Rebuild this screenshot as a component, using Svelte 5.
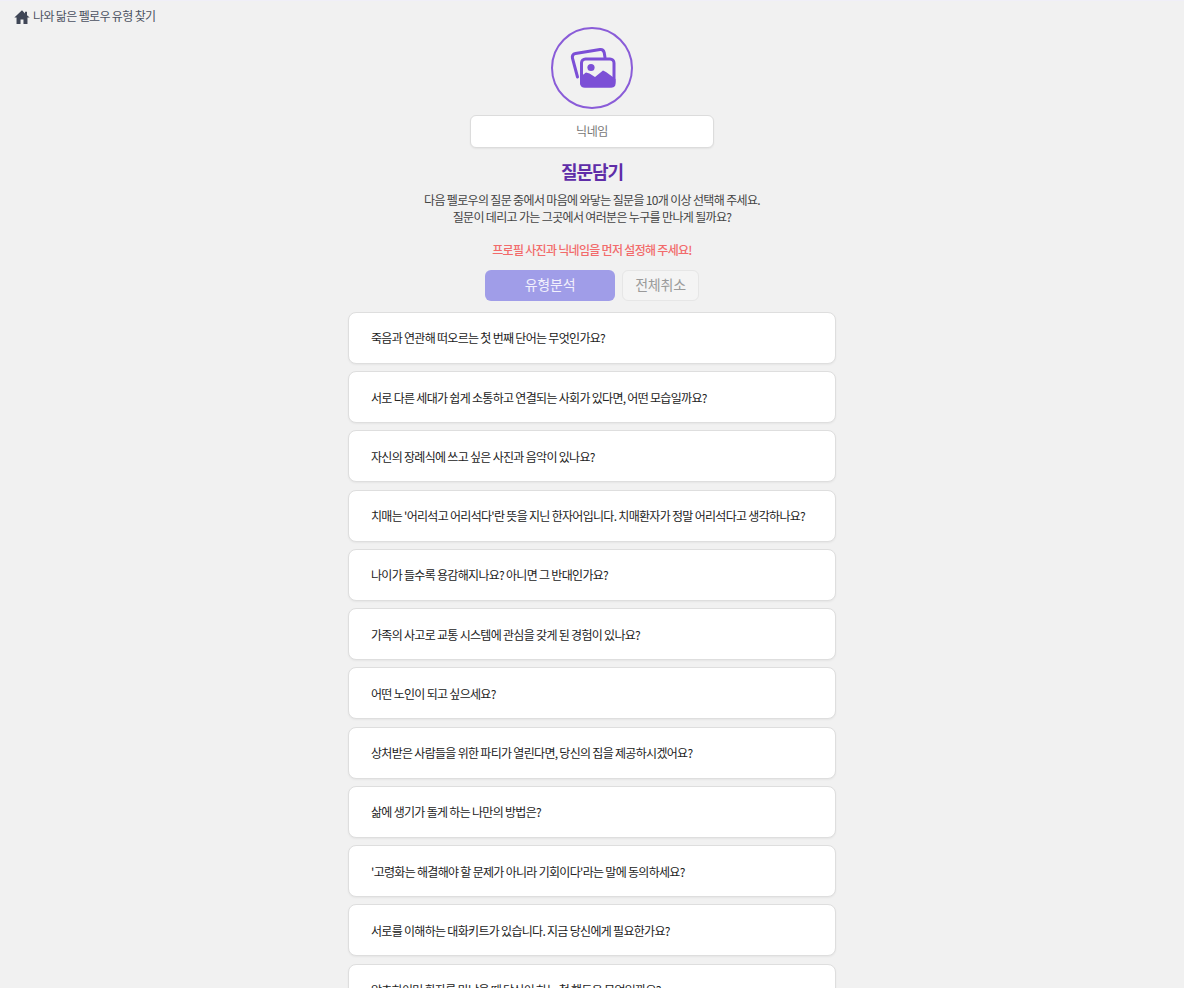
<script>
	const questions = [
		'죽음과 연관해 떠오르는 첫 번째 단어는 무엇인가요?',
		'서로 다른 세대가 쉽게 소통하고 연결되는 사회가 있다면, 어떤 모습일까요?',
		'자신의 장례식에 쓰고 싶은 사진과 음악이 있나요?',
		"치매는 '어리석고 어리석다'란 뜻을 지닌 한자어입니다. 치매환자가 정말 어리석다고 생각하나요?",
		'나이가 들수록 용감해지나요? 아니면 그 반대인가요?',
		'가족의 사고로 교통 시스템에 관심을 갖게 된 경험이 있나요?',
		'어떤 노인이 되고 싶으세요?',
		'상처받은 사람들을 위한 파티가 열린다면, 당신의 집을 제공하시겠어요?',
		'삶에 생기가 돌게 하는 나만의 방법은?',
		"'고령화는 해결해야 할 문제가 아니라 기회이다'라는 말에 동의하세요?",
		'서로를 이해하는 대화키트가 있습니다. 지금 당신에게 필요한가요?',
		'알츠하이머 환자를 만났을 때 당신이 하는 첫 행동은 무엇일까요?'
	];
</script>

<div class="page">
	<header class="top">
		<svg class="home" viewBox="0 0 24 24" width="16" height="16">
			<path d="M12 2 0.5 12.8h3.3V22.500h6v-6.700h4.400v6.700h6v-9.700h3.300L19.500 9.500V4h-3v2.700z" fill="#3f4656" />
		</svg>
		<span>나와 닮은 펠로우 유형 찾기</span>
	</header>

	<main class="main">
		<div class="avatar">
			<svg viewBox="0 0 48 42" width="48" height="42">
				<path d="M9.500 30 4.400 11C4 8.500 5 7 7.500 6.400L32 2.600c2.200-.3 3.600.8 4.200 3l.8 5" fill="none" stroke="#7c4fd6" stroke-width="3" stroke-linecap="round" />
				<rect x="13.500" y="12" width="32.500" height="27" rx="4" fill="none" stroke="#7c4fd6" stroke-width="3" />
				<circle cx="23" cy="20.500" r="3.600" fill="#7c4fd6" />
				<path d="M12 36v-6l6-4.500 3.500 1 5.500 3.500 8-6.500 3 1.500 9.500 7V37c0 2-1.500 3.500-3.500 3.500H16c-2.500 0-4-2-4-4.500z" fill="#7c4fd6" />
			</svg>
		</div>

		<input class="nick" type="text" placeholder="닉네임" />

		<h1>질문담기</h1>
		<p class="desc">
			다음 펠로우의 질문 중에서 마음에 와닿는 질문을 10개 이상 선택해 주세요.<br />
			질문이 데리고 가는 그곳에서 여러분은 누구를 만나게 될까요?
		</p>
		<p class="warn">프로필 사진과 닉네임을 먼저 설정해 주세요!</p>

		<div class="actions">
			<button class="primary" type="button">유형분석</button>
			<button class="ghost" type="button">전체취소</button>
		</div>

		<ul class="list">
			{#each questions as q}
				<li class="card">{q}</li>
			{/each}
		</ul>
	</main>
</div>

<style>
	:global(body) {
		margin: 0;
		background: #f1f1f1;
		overflow: hidden;
	}

	.page {
		height: 988px;
		overflow: hidden;
		font-family: 'Noto Sans CJK KR', 'Noto Sans', sans-serif;
		color: #222;
		border-top: 1px solid #f0eff8;
		box-sizing: border-box;
	}

	.top {
		display: flex;
		align-items: center;
		gap: 3px;
		padding: 5px 14px 0;
		height: 21px;
		box-sizing: content-box;
		font-size: 12px;
		line-height: 20px;
		letter-spacing: -0.65px;
		color: #4b5261;
	}

	.top span {
		margin-bottom: 1px;
	}

	.main {
		display: flex;
		flex-direction: column;
		align-items: center;
	}

	.avatar {
		width: 82px;
		height: 82px;
		box-sizing: border-box;
		border: 2px solid #8a5cd8;
		border-radius: 50%;
		display: flex;
		align-items: center;
		justify-content: center;
	}

	.nick {
		width: 244px;
		height: 33px;
		box-sizing: border-box;
		margin-top: 6px;
		padding: 0 0 2px;
		border: 1px solid #dcdcdc;
		border-radius: 6px;
		background: #fff;
		box-shadow: 0 1px 2px rgba(0, 0, 0, 0.06);
		text-align: center;
		font-family: inherit;
		font-size: 12px;
		letter-spacing: -0.4px;
	}

	.nick::placeholder {
		color: #777;
	}

	h1 {
		margin: 11px 0 0;
		font-size: 18px;
		line-height: 24px;
		font-weight: 700;
		letter-spacing: -1px;
		color: #5f2da8;
	}

	.desc {
		margin: 8px 0 0;
		font-size: 12px;
		line-height: 17px;
		letter-spacing: -0.66px;
		text-align: center;
		color: #444;
	}

	.warn {
		margin: 16px 0 0;
		font-size: 12px;
		line-height: 17px;
		font-weight: 500;
		letter-spacing: -0.7px;
		color: #f26b6b;
	}

	.actions {
		display: flex;
		gap: 7px;
		margin-top: 12px;
	}

	button {
		height: 31px;
		box-sizing: border-box;
		border-radius: 6px;
		font-family: inherit;
		font-size: 14px;
		letter-spacing: -0.2px;
		padding: 0 0 3px;
	}

	.primary {
		width: 130px;
		border: 0;
		background: #a09de8;
		color: #f1f0fc;
	}

	.ghost {
		width: 77px;
		border: 1px solid #e6e6e6;
		background: #f4f4f4;
		color: #9a9a9a;
	}

	.list {
		list-style: none;
		margin: 10.8px 0 0;
		padding: 0;
		display: flex;
		flex-direction: column;
		gap: 7.25px;
	}

	.card {
		width: 488px;
		height: 52px;
		box-sizing: border-box;
		display: flex;
		align-items: center;
		padding: 0 22px;
		background: #fff;
		border: 1px solid #dedede;
		border-radius: 8px;
		box-shadow: 0 1px 2px rgba(0, 0, 0, 0.05);
		font-size: 12px;
		font-weight: 400;
		letter-spacing: -0.7px;
		white-space: nowrap;
		color: #222;
	}
</style>
